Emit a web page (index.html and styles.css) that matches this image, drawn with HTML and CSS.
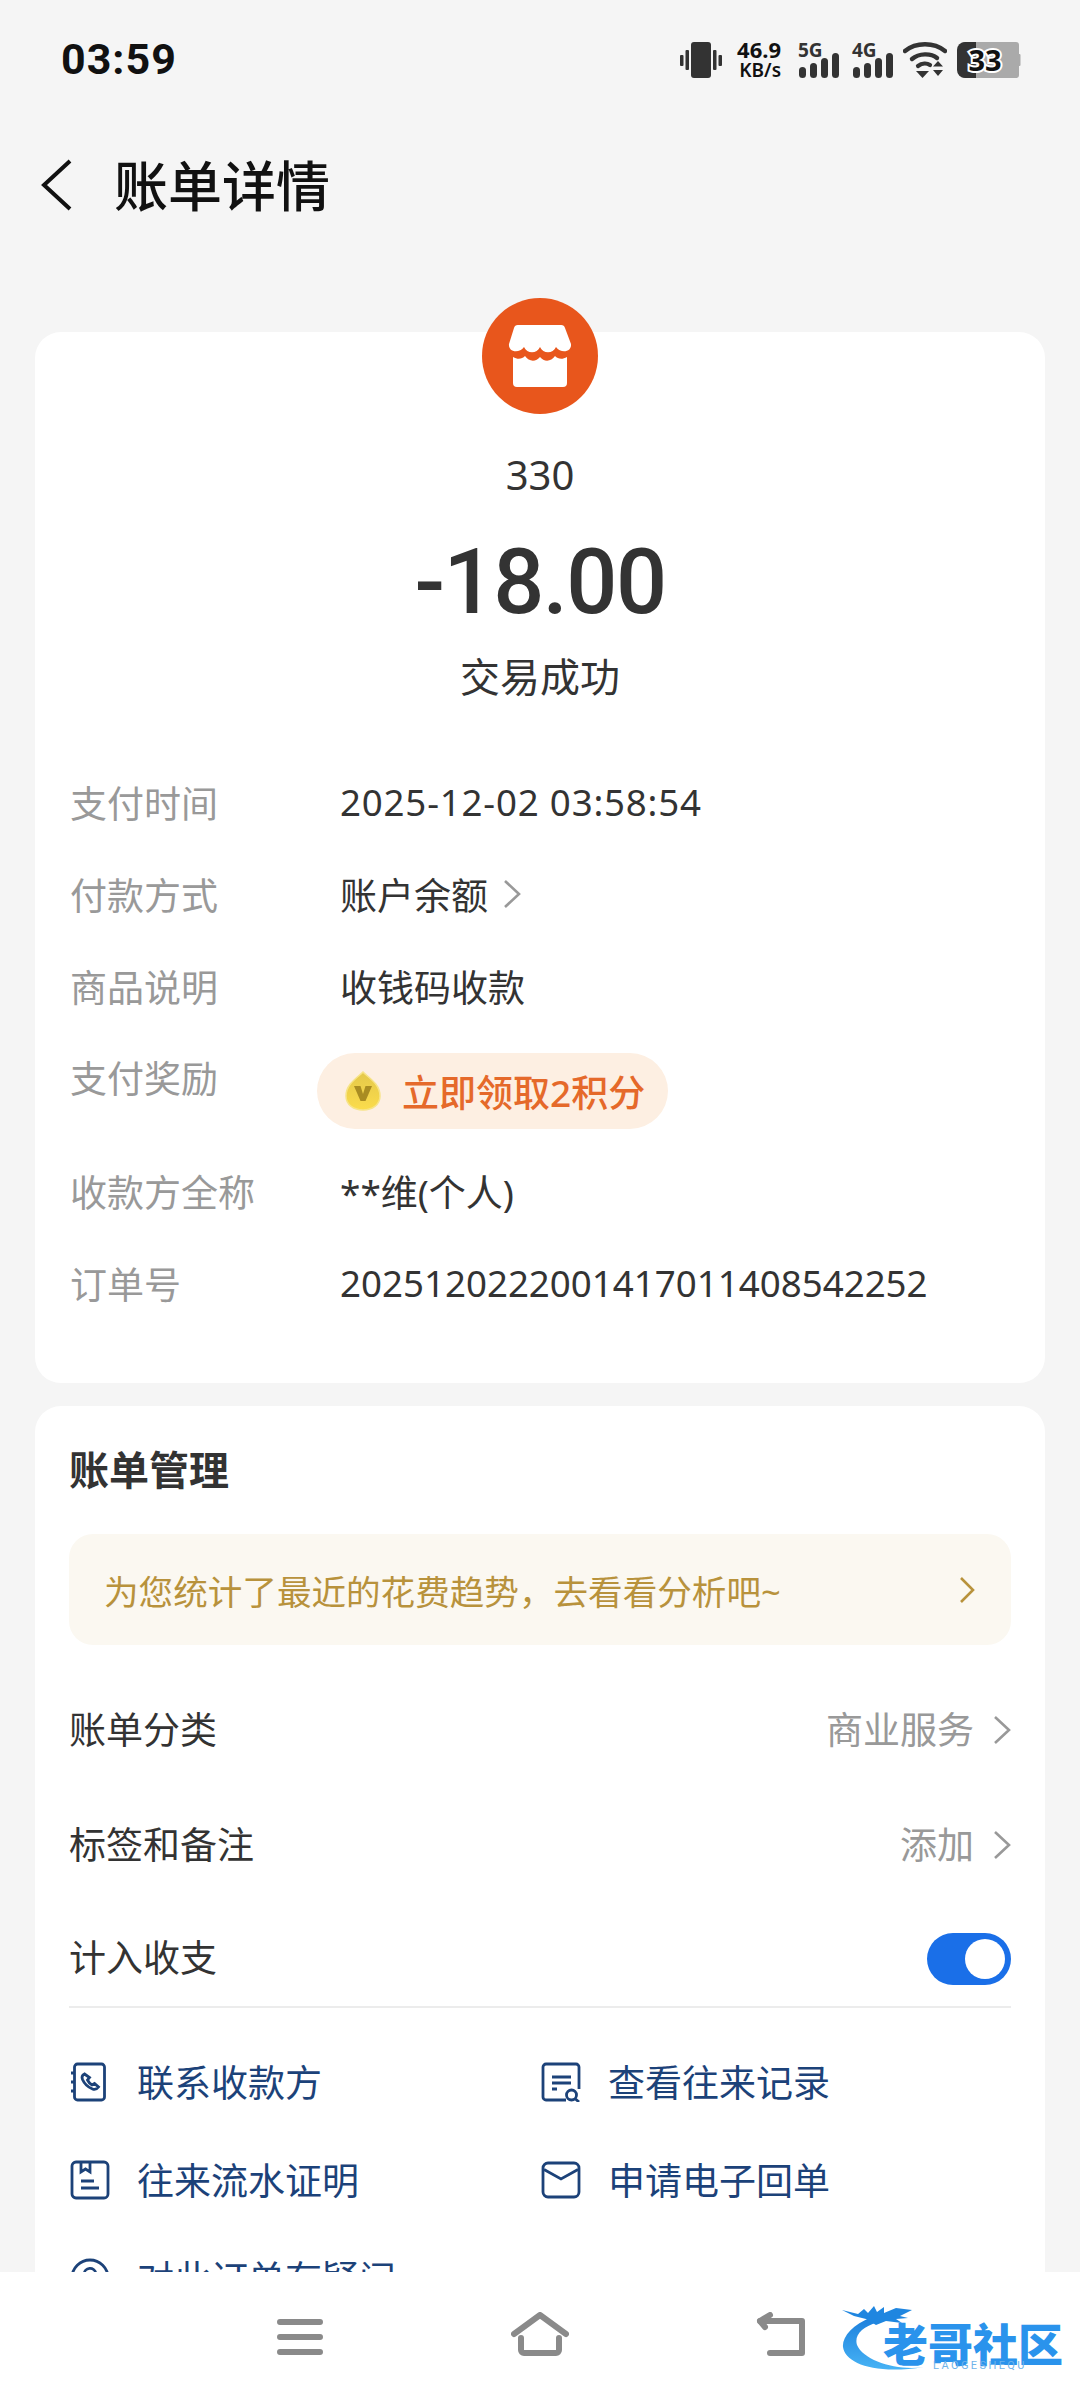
FILE: index.html
```html
<!DOCTYPE html>
<html lang="zh-CN">
<head>
  <meta charset="UTF-8" />
  <meta name="viewport" content="width=device-width, initial-scale=1.0"/>
  <title>账单详情</title>
  <link rel="stylesheet" href="styles.css">
</head>
<body>
<div class="page">

  <!-- Status bar -->
  <div class="status-bar">
    <span class="clock">03:59</span>
    <div class="status-icons">
      <svg class="ic-vibrate" width="44" height="36" viewBox="0 0 44 36">
        <rect x="11" y="0" width="20" height="36" rx="3"/>
        <rect x="0" y="13" width="3.5" height="11" rx="1"/>
        <rect x="5.500" y="8" width="3.5" height="20" rx="1"/>
        <rect x="33" y="8" width="3.5" height="20" rx="1"/>
        <rect x="38.500" y="13" width="3.5" height="11" rx="1"/>
      </svg>
      <div class="net-speed">46.9<br>KB/s</div>
      <div class="signal">
        <span class="signal-type">5G</span>
        <svg width="40" height="25" viewBox="0 0 40 25">
          <rect x="0" y="14" width="7" height="11" rx="3.5"/>
          <rect x="11" y="10" width="7" height="15" rx="3.5"/>
          <rect x="22" y="5" width="7" height="20" rx="3.5"/>
          <rect x="33" y="0" width="7" height="25" rx="3.5"/>
        </svg>
      </div>
      <div class="signal">
        <span class="signal-type">4G</span>
        <svg width="40" height="25" viewBox="0 0 40 25">
          <rect x="0" y="14" width="7" height="11" rx="3.5"/>
          <rect x="11" y="10" width="7" height="15" rx="3.5"/>
          <rect x="22" y="5" width="7" height="20" rx="3.5"/>
          <rect x="33" y="0" width="7" height="25" rx="3.5"/>
        </svg>
      </div>
      <svg class="ic-wifi" width="44" height="36" viewBox="0 0 44 36">
        <path d="M2 9C13 0 31 0 42 9" fill="none" stroke="#333" stroke-width="4.4" stroke-linecap="round"/>
        <path d="M9 17C16 11 28 11 34 16" fill="none" stroke="#333" stroke-width="4.4" stroke-linecap="round"/>
        <path d="M15 24C19 21 24 21 27 23" fill="none" stroke="#333" stroke-width="4.2" stroke-linecap="round"/>
        <path d="M13 29H26L19.500 36Z" fill="#333"/>
        <path d="M30 24.500L35 19L40 24.500ZM30 28H40L35 34Z" fill="#333"/>
      </svg>
      <div class="battery">
        <svg width="64" height="36" viewBox="0 0 64 36">
          <path d="M6 0H59a3 3 0 0 1 3 3V33a3 3 0 0 1-3 3H6z" fill="#aaa"/>
          <rect x="60" y="12" width="3.500" height="12" rx="1" fill="#aaa"/>
          <path d="M19 0V36H8a8 8 0 0 1-8-8V8a8 8 0 0 1 8-8z" fill="#333"/>
        </svg>
        <span class="battery-num">33</span>
      </div>
    </div>
  </div>

  <!-- Header -->
  <div class="top-bar">
    <svg class="back-arrow" width="32" height="52" viewBox="0 0 32 52">
      <path d="M29 2L3 26L29 50"/>
    </svg>
    <h1>账单详情</h1>
  </div>

  <!-- Bill card -->
  <div class="card bill-card">
    <div class="shop-badge">
      <svg width="116" height="116" viewBox="0 0 116 116">
        <circle cx="58" cy="58" r="58" fill="#e8561c"/>
        <path fill="#fff" d="M36 27H79a4 4 0 0 1 4 3L89 46c1 8-10 10-15 3-3 7-13 7-16 0-3 7-13 7-16 0-5 7-16 5-15-3L32 30a4 4 0 0 1 4-3z"/>
        <path fill="#fff" d="M31 59c5 3 9 2 12-1 4 6 11 6 15 1 4 5 11 5 15-1 3 3 7 4 12 1V85a4 4 0 0 1-4 4H35a4 4 0 0 1-4-4z"/>
      </svg>
    </div>
    <div class="payee">330</div>
    <div class="amount">-18.00</div>
    <div class="pay-state">交易成功</div>

    <div class="info-list">
      <div class="info-row">
        <span class="info-label">支付时间</span>
        <span class="info-value date-value">2025-12-02 03:58:54</span>
      </div>
      <div class="info-row">
        <span class="info-label">付款方式</span>
        <span class="info-value">账户余额</span>
        <svg class="chev chev-method" width="18" height="30" viewBox="0 0 18 30"><path d="M2 2L16 15L2 28"/></svg>
      </div>
      <div class="info-row">
        <span class="info-label">商品说明</span>
        <span class="info-value">收钱码收款</span>
      </div>
      <div class="info-row reward-row">
        <span class="info-label">支付奖励</span>
        <div class="reward-pill">
          <svg width="36" height="40" viewBox="0 0 36 40">
            <defs>
              <linearGradient id="coin" x1="0" y1="0" x2="0" y2="1">
                <stop offset="0" stop-color="#e4c84a"/>
                <stop offset="1" stop-color="#fbdc4c"/>
              </linearGradient>
            </defs>
            <path d="M18 1C24 7 35 13 35 25C35 34 27 39 18 39C9 39 1 34 1 25C1 13 12 7 18 1Z" fill="url(#coin)" stroke="#f7e488" stroke-width="1.500"/>
            <path d="M9 15H15.500L18 23L20.500 15H27L20.500 30H15.500Z" fill="#a98c22"/>
          </svg>
          <span>立即领取2积分</span>
        </div>
      </div>
      <div class="info-row">
        <span class="info-label">收款方全称</span>
        <span class="info-value">**维(个人)</span>
      </div>
      <div class="info-row">
        <span class="info-label">订单号</span>
        <span class="info-value order-value">2025120222001417011408542252</span>
      </div>
    </div>
  </div>

  <!-- Bill management card -->
  <div class="card manage-card">
    <h2>账单管理</h2>
    <div class="tip-banner">
      <span>为您统计了最近的花费趋势，去看看分析吧~</span>
      <svg class="chev chev-gold" width="16" height="28" viewBox="0 0 16 28"><path d="M2 2L14 14L2 26"/></svg>
    </div>

    <div class="manage-row">
      <span class="manage-label">账单分类</span>
      <span class="manage-value">商业服务</span>
      <svg class="chev" width="18" height="30" viewBox="0 0 18 30"><path d="M2 2L16 15L2 28"/></svg>
    </div>
    <div class="manage-row">
      <span class="manage-label">标签和备注</span>
      <span class="manage-value">添加</span>
      <svg class="chev" width="18" height="30" viewBox="0 0 18 30"><path d="M2 2L16 15L2 28"/></svg>
    </div>
    <div class="manage-row toggle-row">
      <span class="manage-label">计入收支</span>
      <div class="switch"><div class="knob"></div></div>
    </div>

    <div class="link-grid">
      <div class="link-item">
        <svg class="link-icon" width="40" height="40" viewBox="0 0 40 40">
          <rect x="4.500" y="2" width="30" height="36" rx="3"/>
          <path d="M1 11H4.500M1 20H4.500M1 29H4.500"/>
          <path d="M14.500 12c-2 1-3 3-2 5.500 2 4.500 5 7.500 10 9.500 2.500 1 4.500 0 6-2l-4-3.500-2.500 1.500c-2-1-3.500-3-4.500-5l2-2.500z"/>
        </svg>
        <span>联系收款方</span>
      </div>
      <div class="link-item">
        <svg class="link-icon" width="40" height="40" viewBox="0 0 40 40">
          <path d="M25 38H5a3 3 0 0 1-3-3V5a3 3 0 0 1 3-3H35a3 3 0 0 1 3 3V27"/>
          <path d="M11 15H30M11 21H30M11 27H16"/>
          <circle cx="30.500" cy="33" r="5"/>
          <path d="M34.500 37L38 40"/>
        </svg>
        <span>查看往来记录</span>
      </div>
      <div class="link-item">
        <svg class="link-icon" width="40" height="40" viewBox="0 0 40 40">
          <rect x="2" y="2" width="36" height="36" rx="4"/>
          <path d="M11 2V12L15.500 9L20 12V2"/>
          <path d="M11 21H24M11 28H29"/>
        </svg>
        <span>往来流水证明</span>
      </div>
      <div class="link-item">
        <svg class="link-icon" width="40" height="40" viewBox="0 0 40 40">
          <rect x="2" y="3" width="36" height="34" rx="5"/>
          <path d="M3 9.500L20 19L37 9.500"/>
        </svg>
        <span>申请电子回单</span>
      </div>
      <div class="link-item">
        <svg class="link-icon" width="40" height="40" viewBox="0 0 40 40">
          <circle cx="20" cy="20" r="18"/>
          <path d="M14 16a6 6 0 1 1 8 6c-1.500 .8-2 2-2 3.500"/>
        </svg>
        <span>对此订单有疑问</span>
      </div>
    </div>
  </div>

  <!-- System navigation, sits over the scrolling content -->
  <div class="nav-bar">
    <svg class="nav-btn nav-menu" width="46" height="36" viewBox="0 0 46 36">
      <path d="M3 3H43M3 18H43M3 33H43"/>
    </svg>
    <svg class="nav-btn nav-home" width="58" height="44" viewBox="0 0 58 44">
      <path d="M3 22L29 3L55 22"/>
      <path d="M10 26V38a3 3 0 0 0 3 3H45a3 3 0 0 0 3-3V26"/>
    </svg>
    <svg class="nav-btn nav-back" width="50" height="44" viewBox="0 0 50 44">
      <path d="M4 9H46V41H14"/>
      <path d="M14 3L4 9L9 15"/>
    </svg>
    <div class="watermark">
      <svg width="100" height="68" viewBox="0 0 100 68">
        <defs>
          <linearGradient id="ring" x1="0" y1="0" x2="0" y2="1">
            <stop offset="0" stop-color="#1c7fdc"/>
            <stop offset="1" stop-color="#47b3f5"/>
          </linearGradient>
        </defs>
        <path fill="url(#ring)" d="M30 12C10 20 0 32 1 42C3 58 32 70 82 62C55 66 22 56 15 40C12 30 20 22 36 17Z"/>
        <path fill="#1f86e0" d="M0 5L16 9L22 4L26 8L32 1L35 7L42 2L42 8L54 3L70 5L58 11L66 13L54 14L60 18L44 16L34 20L24 14L12 11Z"/>
      </svg>
      <div class="watermark-text">老哥社区<br>LAOGESHEQU</div>
    </div>
  </div>

</div>
</body>
</html>
```

FILE: styles.css
```css
* {
  margin: 0;
  padding: 0;
  box-sizing: border-box;
}

body {
  font-family: "Noto Sans", "Noto Sans CJK SC", sans-serif;
  background: #f5f5f5;
  color: #333;
}

.page {
  width: 1080px;
  height: 2400px;
  position: relative;
  overflow: hidden;
  background: #f5f5f5;
}

/* Status bar */
.status-bar {
  height: 118px;
  padding: 42px 59px 0 61px;
  display: flex;
  justify-content: space-between;
  align-items: flex-start;
}

.clock {
  font-family: Roboto, sans-serif;
  font-size: 43px;
  font-weight: 700;
  line-height: 34px;
  letter-spacing: 1px;
  color: #111;
}

.status-icons {
  display: flex;
  align-items: flex-start;
}

.status-icons svg {
  fill: #333;
  display: block;
}

.ic-vibrate {
  margin-right: 10px;
}

.net-speed {
  width: 47px;
  height: 36px;
  margin-right: 18px;
  text-align: right;
  white-space: nowrap;
  color: #111;
  font-size: 19px;
  font-weight: 600;
  line-height: 19px;
}

.net-speed::first-line {
  font-size: 22px;
  font-weight: 700;
  line-height: 17px;
}

.signal {
  width: 40px;
  margin-right: 14px;
  height: 36px;
  position: relative;
}

.signal + .ic-wifi {
  margin-left: -4px;
}

.signal svg {
  position: absolute;
  left: 0;
  bottom: 0;
}

.signal-type {
  position: absolute;
  left: -1px;
  top: 0;
  font-size: 19px;
  font-weight: 700;
  line-height: 17px;
}

.ic-wifi {
  margin-right: 10px;
}

.battery {
  width: 64px;
  height: 36px;
  position: relative;
}

.battery-num {
  position: absolute;
  left: 10px;
  top: 0;
  width: 36px;
  text-align: center;
  font-size: 29px;
  font-weight: 700;
  line-height: 36px;
  color: #111;
  -webkit-text-stroke: 4px #fff;
  paint-order: stroke fill;
}

/* Header */
.top-bar {
  height: 136px;
  padding-left: 41px;
  display: flex;
  align-items: center;
}

.back-arrow {
  margin-right: 41px;
  margin-top: -2px;
}

.back-arrow path {
  fill: none;
  stroke: #111;
  stroke-width: 4px;
}

.top-bar h1 {
  font-size: 54px;
  font-weight: 500;
  line-height: 70px;
  color: #111;
  margin-top: -5px;
  font-family: "Noto Sans CJK SC", sans-serif;
}

/* Cards */
.card {
  margin: 0 35px;
  background: #fff;
  border-radius: 26px;
}

.bill-card {
  margin-top: 78px;
  height: 1051px;
  padding: 0 35px;
  text-align: center;
}

.shop-badge {
  width: 116px;
  height: 116px;
  margin: 0 auto;
  position: relative;
  top: -34px;
  margin-bottom: -34px;
}

.shop-badge svg {
  display: block;
}

.payee {
  margin-top: 35px;
  font-size: 40px;
  line-height: 52px;
}

.amount {
  margin-top: 32px;
  font-family: Roboto, sans-serif;
  font-size: 90px;
  font-weight: 500;
  line-height: 100px;
  letter-spacing: -1.5px;
}

.pay-state {
  margin-top: 18px;
  font-size: 40px;
  line-height: 52px;
}

.info-list {
  margin-top: 53px;
  text-align: left;
}

.info-row {
  height: 92px;
  display: flex;
  align-items: center;
  font-size: 37px;
}

.info-label {
  width: 270px;
  flex-shrink: 0;
  color: #999;
}

.info-value {
  color: #333;
}

.date-value {
  font-size: 36.7px;
  letter-spacing: .8px;
}

.order-value {
  font-size: 36.7px;
}

.chev {
  flex-shrink: 0;
}

.chev path {
  fill: none;
  stroke: #999;
  stroke-width: 2.6px;
}

.chev-method {
  margin-left: 15px;
}

.reward-row {
  height: 113px;
  align-items: flex-start;
  padding-top: 18px;
}

.reward-row .info-label {
  width: 247px;
}

.reward-pill {
  width: 351px;
  height: 76px;
  margin-top: 3px;
  padding-left: 28px;
  display: flex;
  align-items: center;
  gap: 21px;
  border-radius: 38px;
  background: #fdefe2;
  color: #e5692a;
}

.reward-pill span {
  font-size: 37px;
  font-weight: 500;
}

/* Management card */
.manage-card {
  margin-top: 23px;
  height: 1000px;
  padding: 37px 34px 0;
}

.manage-card h2 {
  font-size: 40px;
  font-weight: 700;
  line-height: 50px;
  font-family: "Noto Sans CJK SC", sans-serif;
}

.tip-banner {
  margin-top: 41px;
  height: 111px;
  padding: 0 36px 0 35px;
  display: flex;
  justify-content: space-between;
  align-items: center;
  border-radius: 24px;
  background: #fbf8f1;
  color: #b8923c;
  font-size: 34.6px;
}

.chev-gold path {
  stroke: #b8923c;
}

.manage-row {
  height: 115px;
  display: flex;
  align-items: center;
  font-size: 37px;
}

.tip-banner + .manage-row {
  margin-top: 27px;
}

.manage-label {
  flex: 1;
  margin-bottom: 3px;
}

.manage-value {
  color: #999;
  margin-right: 19px;
  margin-bottom: 3px;
}

.toggle-row {
  height: 106px;
  padding-top: 10px;
  border-bottom: 2px solid #ececec;
}

.toggle-row .manage-label {
  margin-bottom: 7px;
}

.switch {
  width: 84px;
  height: 52px;
  padding: 6px 6px 6px 38px;
  border-radius: 26px;
  background: #1a6fe8;
}

.knob {
  width: 40px;
  height: 40px;
  border-radius: 50%;
  background: #fff;
}

.link-grid {
  margin-top: 25px;
  display: grid;
  grid-template-columns: 471px 1fr;
  grid-auto-rows: 98px;
}

.link-item {
  display: flex;
  align-items: center;
  gap: 27px;
  padding-left: 1px;
  font-size: 37px;
  color: #1c4279;
}

.link-item span {
  margin-bottom: 2px;
}

.link-icon {
  flex-shrink: 0;
}

.link-icon rect,
.link-icon path,
.link-icon circle {
  fill: none;
  stroke: #1c4279;
  stroke-width: 2.8px;
}

/* Bottom navigation */
.nav-bar {
  position: absolute;
  left: 0;
  right: 0;
  bottom: 0;
  height: 128px;
  background: #fff;
}

.nav-btn {
  position: absolute;
}

.nav-btn path {
  fill: none;
  stroke: #8a8a8a;
  stroke-width: 6px;
  stroke-linecap: round;
  stroke-linejoin: round;
}

.nav-menu {
  left: 277px;
  top: 47px;
}

.nav-home {
  left: 511px;
  top: 40px;
}

.nav-back {
  left: 756px;
  top: 40px;
}

.watermark {
  position: absolute;
  left: 842px;
  top: 33px;
  width: 220px;
  height: 68px;
}

.watermark svg {
  display: block;
}

/* hanging indent pushes the small second line under the name */
.watermark-text {
  position: absolute;
  left: 41px;
  top: 21px;
  width: 180px;
  padding-left: 50px;
  text-indent: -50px;
  font-family: Roboto, "Noto Sans CJK SC", sans-serif;
  font-size: 11px;
  letter-spacing: 2.4px;
  line-height: 12px;
  color: #6fb4ea;
  white-space: nowrap;
}

.watermark-text::first-line {
  font-family: "Noto Sans CJK SC", sans-serif;
  font-size: 45px;
  font-weight: 900;
  letter-spacing: 0;
  line-height: 34px;
  color: #2a93ec;
}
```
